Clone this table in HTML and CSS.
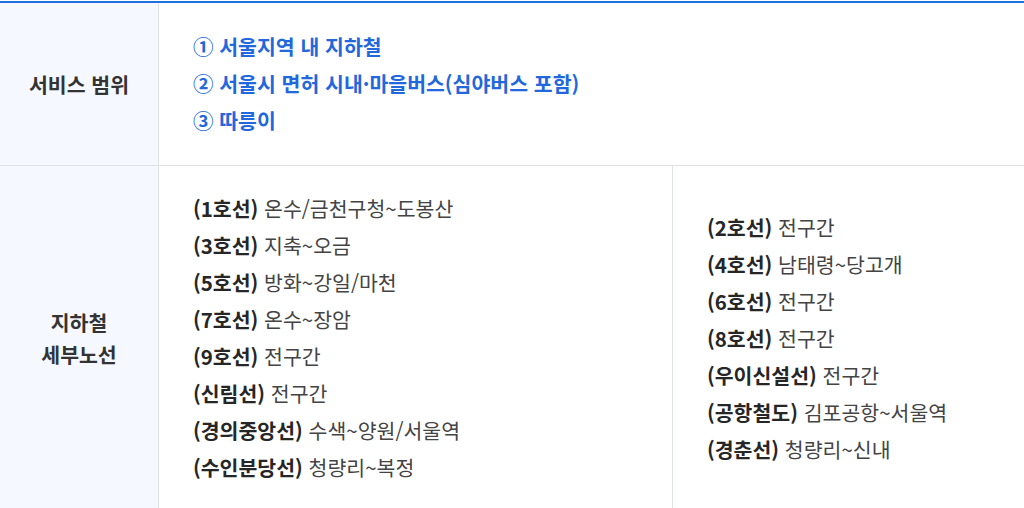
FILE: index.html
```html
<!DOCTYPE html>
<html lang="ko">
<head>
<meta charset="utf-8">
<title>서비스 범위</title>
<link rel="stylesheet" href="styles.css">
</head>
<body>
<div class="table">
  <div class="row row-scope">
    <div class="th">서비스 범위</div>
    <div class="td">
      <ul class="scope-list">
        <li>① 서울지역 내 지하철</li>
        <li>② 서울시 면허 시내·마을버스(심야버스 포함)</li>
        <li>③ 따릉이</li>
      </ul>
    </div>
  </div>
  <div class="row row-lines">
    <div class="th">지하철<br>세부노선</div>
    <div class="td lines">
      <ul class="line-col col-left">
        <li><b>(1호선)</b> 온수/금천구청~도봉산</li>
        <li><b>(3호선)</b> 지축~오금</li>
        <li><b>(5호선)</b> 방화~강일/마천</li>
        <li><b>(7호선)</b> 온수~장암</li>
        <li><b>(9호선)</b> 전구간</li>
        <li><b>(신림선)</b> 전구간</li>
        <li><b>(경의중앙선)</b> 수색~양원/서울역</li>
        <li><b>(수인분당선)</b> 청량리~복정</li>
      </ul>
      <ul class="line-col col-right">
        <li><b>(2호선)</b> 전구간</li>
        <li><b>(4호선)</b> 남태령~당고개</li>
        <li><b>(6호선)</b> 전구간</li>
        <li><b>(8호선)</b> 전구간</li>
        <li><b>(우이신설선)</b> 전구간</li>
        <li><b>(공항철도)</b> 김포공항~서울역</li>
        <li><b>(경춘선)</b> 청량리~신내</li>
      </ul>
    </div>
  </div>
</div>
</body>
</html>
```

FILE: styles.css
```css
* { box-sizing: border-box; }
html, body { margin: 0; padding: 0; background: #fff; }
body {
  padding-top: 1px;
  font-family: "Noto Sans CJK KR", "Noto Sans", sans-serif;
  color: #444;
  overflow: hidden;
}
.table {
  border-top: 2px solid #1f6fde;
}
.row {
  display: flex;
  border-bottom: 1px solid #dfe1e5;
}
.th {
  flex: 0 0 159px;
  background: #f5f8ff;
  border-right: 1px solid #dfe1e5;
  display: flex;
  align-items: center;
  justify-content: center;
  text-align: center;
  font-size: 20.5px;
  font-weight: 700;
  color: #333;
  line-height: 32px;
}
.td { flex: 1; }
ul { list-style: none; margin: 0; padding: 0; }
.scope-list {
  padding: 25px 34px 26px;
  font-size: 20.5px;
  font-weight: 700;
  color: #2268dc;
  line-height: 37px;
}
.lines { display: flex; }
.line-col {
  font-size: 20.5px;
  line-height: 37px;
  color: #444;
}
.line-col b { font-weight: 700; color: #262626; }
.col-left {
  flex: 0 0 514px;
  padding: 24px 34px 24px 34px;
  border-right: 1px solid #dfe1e5;
}
.col-right {
  flex: 1;
  align-self: center;
  padding: 0 34px;
}
```
